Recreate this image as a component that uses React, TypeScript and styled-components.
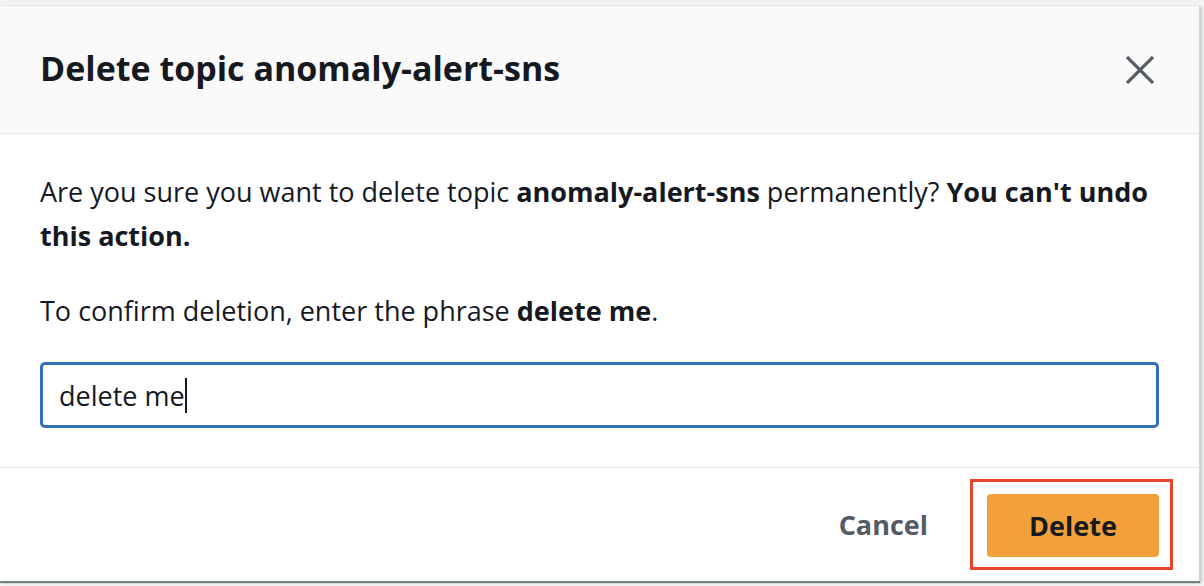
import React from "react";
import styled, { createGlobalStyle } from "styled-components";

const Global = createGlobalStyle`
  html, body { margin: 0; padding: 0; background: #f2f3f3; }
  body { font-family: "Open Sans", "Noto Sans", Arial, sans-serif; color: #16191f; }
  * { box-sizing: border-box; }
`;

const Page = styled.div`
  width: 1204px;
  height: 586px;
  overflow: hidden;
  padding-top: 5px;
  background: #f2f3f3;
`;

const Modal = styled.div`
  width: 1200px;
  background: #ffffff;
  border-top: 1px solid #e4e7e7;
  border-right: 1px solid #d0d5d5;
  box-shadow: 0 2px 1px 0 rgba(90, 100, 100, 0.75), 2px 2px 3px rgba(0, 28, 36, 0.15);
  display: flex;
  flex-direction: column;
`;

const Header = styled.div`
  height: 128px;
  background: #fafafa;
  border-bottom: 1px solid #e6e9e9;
  padding: 0 43px 0 40px;
  display: flex;
  align-items: center;
  justify-content: space-between;
`;

const Title = styled.h2`
  margin: 0 0 4px 0;
  font-size: 34px;
  font-weight: 700;
  color: #16191f;
`;

const CloseButton = styled.button`
  border: none;
  background: transparent;
  padding: 0;
  width: 32px;
  height: 32px;
  display: flex;
  align-items: center;
  justify-content: center;
  cursor: pointer;
`;

const Body = styled.div`
  padding: 36px 40px 39px 40px;
  border-bottom: 1px solid #e6e9e9;
`;

const Paragraph = styled.p<{ $gap?: number }>`
  margin: 0 0 ${(p) => p.$gap ?? 0}px 0;
  font-size: 27px;
  line-height: 44px;
  color: #16191f;
`;

const Strong = styled.b`
  font-weight: 700;
`;

const Field = styled.div`
  height: 66px;
  border: 3px solid #2f72b7;
  border-radius: 5px;
  padding: 0 16px;
  display: flex;
  align-items: center;
  font-size: 27px;
  color: #16191f;
`;

const Caret = styled.span`
  display: inline-block;
  width: 2px;
  height: 35px;
  background: #16191f;
  margin-left: 0;
`;

const Footer = styled.div`
  height: 113px;
  padding-right: 26px;
  display: flex;
  align-items: center;
  justify-content: flex-end;
`;

const LinkButton = styled.button`
  border: none;
  background: transparent;
  font-family: inherit;
  font-size: 27px;
  font-weight: 700;
  color: #545b64;
  padding: 0;
  margin-right: 42px;
  cursor: pointer;
`;

const Highlight = styled.div`
  border: 3px solid #e8432f;
  padding: 12px 11px 10px 14px;
  display: flex;
`;

const PrimaryButton = styled.button`
  width: 172px;
  height: 63px;
  border: none;
  border-radius: 4px;
  background: #f1a03b;
  font-family: inherit;
  font-size: 27px;
  font-weight: 700;
  color: #16191f;
  cursor: pointer;
`;

const CloseIcon = () => (
  <svg width="28" height="28" viewBox="0 0 28 28">
    <path d="M1 1 L27 27 M27 1 L1 27" stroke="#545b64" strokeWidth="3.2" fill="none" />
  </svg>
);

export default function App() {
  return (
    <>
      <Global />
      <Page>
        <Modal>
          <Header>
            <Title>Delete topic anomaly-alert-sns</Title>
            <CloseButton aria-label="Close">
              <CloseIcon />
            </CloseButton>
          </Header>
          <Body>
            <Paragraph $gap={31}>
              Are you sure you want to delete topic <Strong>anomaly-alert-sns</Strong> permanently?{" "}
              <Strong>You can't undo this action.</Strong>
            </Paragraph>
            <Paragraph $gap={29}>
              To confirm deletion, enter the phrase <Strong>delete me</Strong>.
            </Paragraph>
            <Field>
              delete me
              <Caret />
            </Field>
          </Body>
          <Footer>
            <LinkButton>Cancel</LinkButton>
            <Highlight>
              <PrimaryButton>Delete</PrimaryButton>
            </Highlight>
          </Footer>
        </Modal>
      </Page>
    </>
  );
}
